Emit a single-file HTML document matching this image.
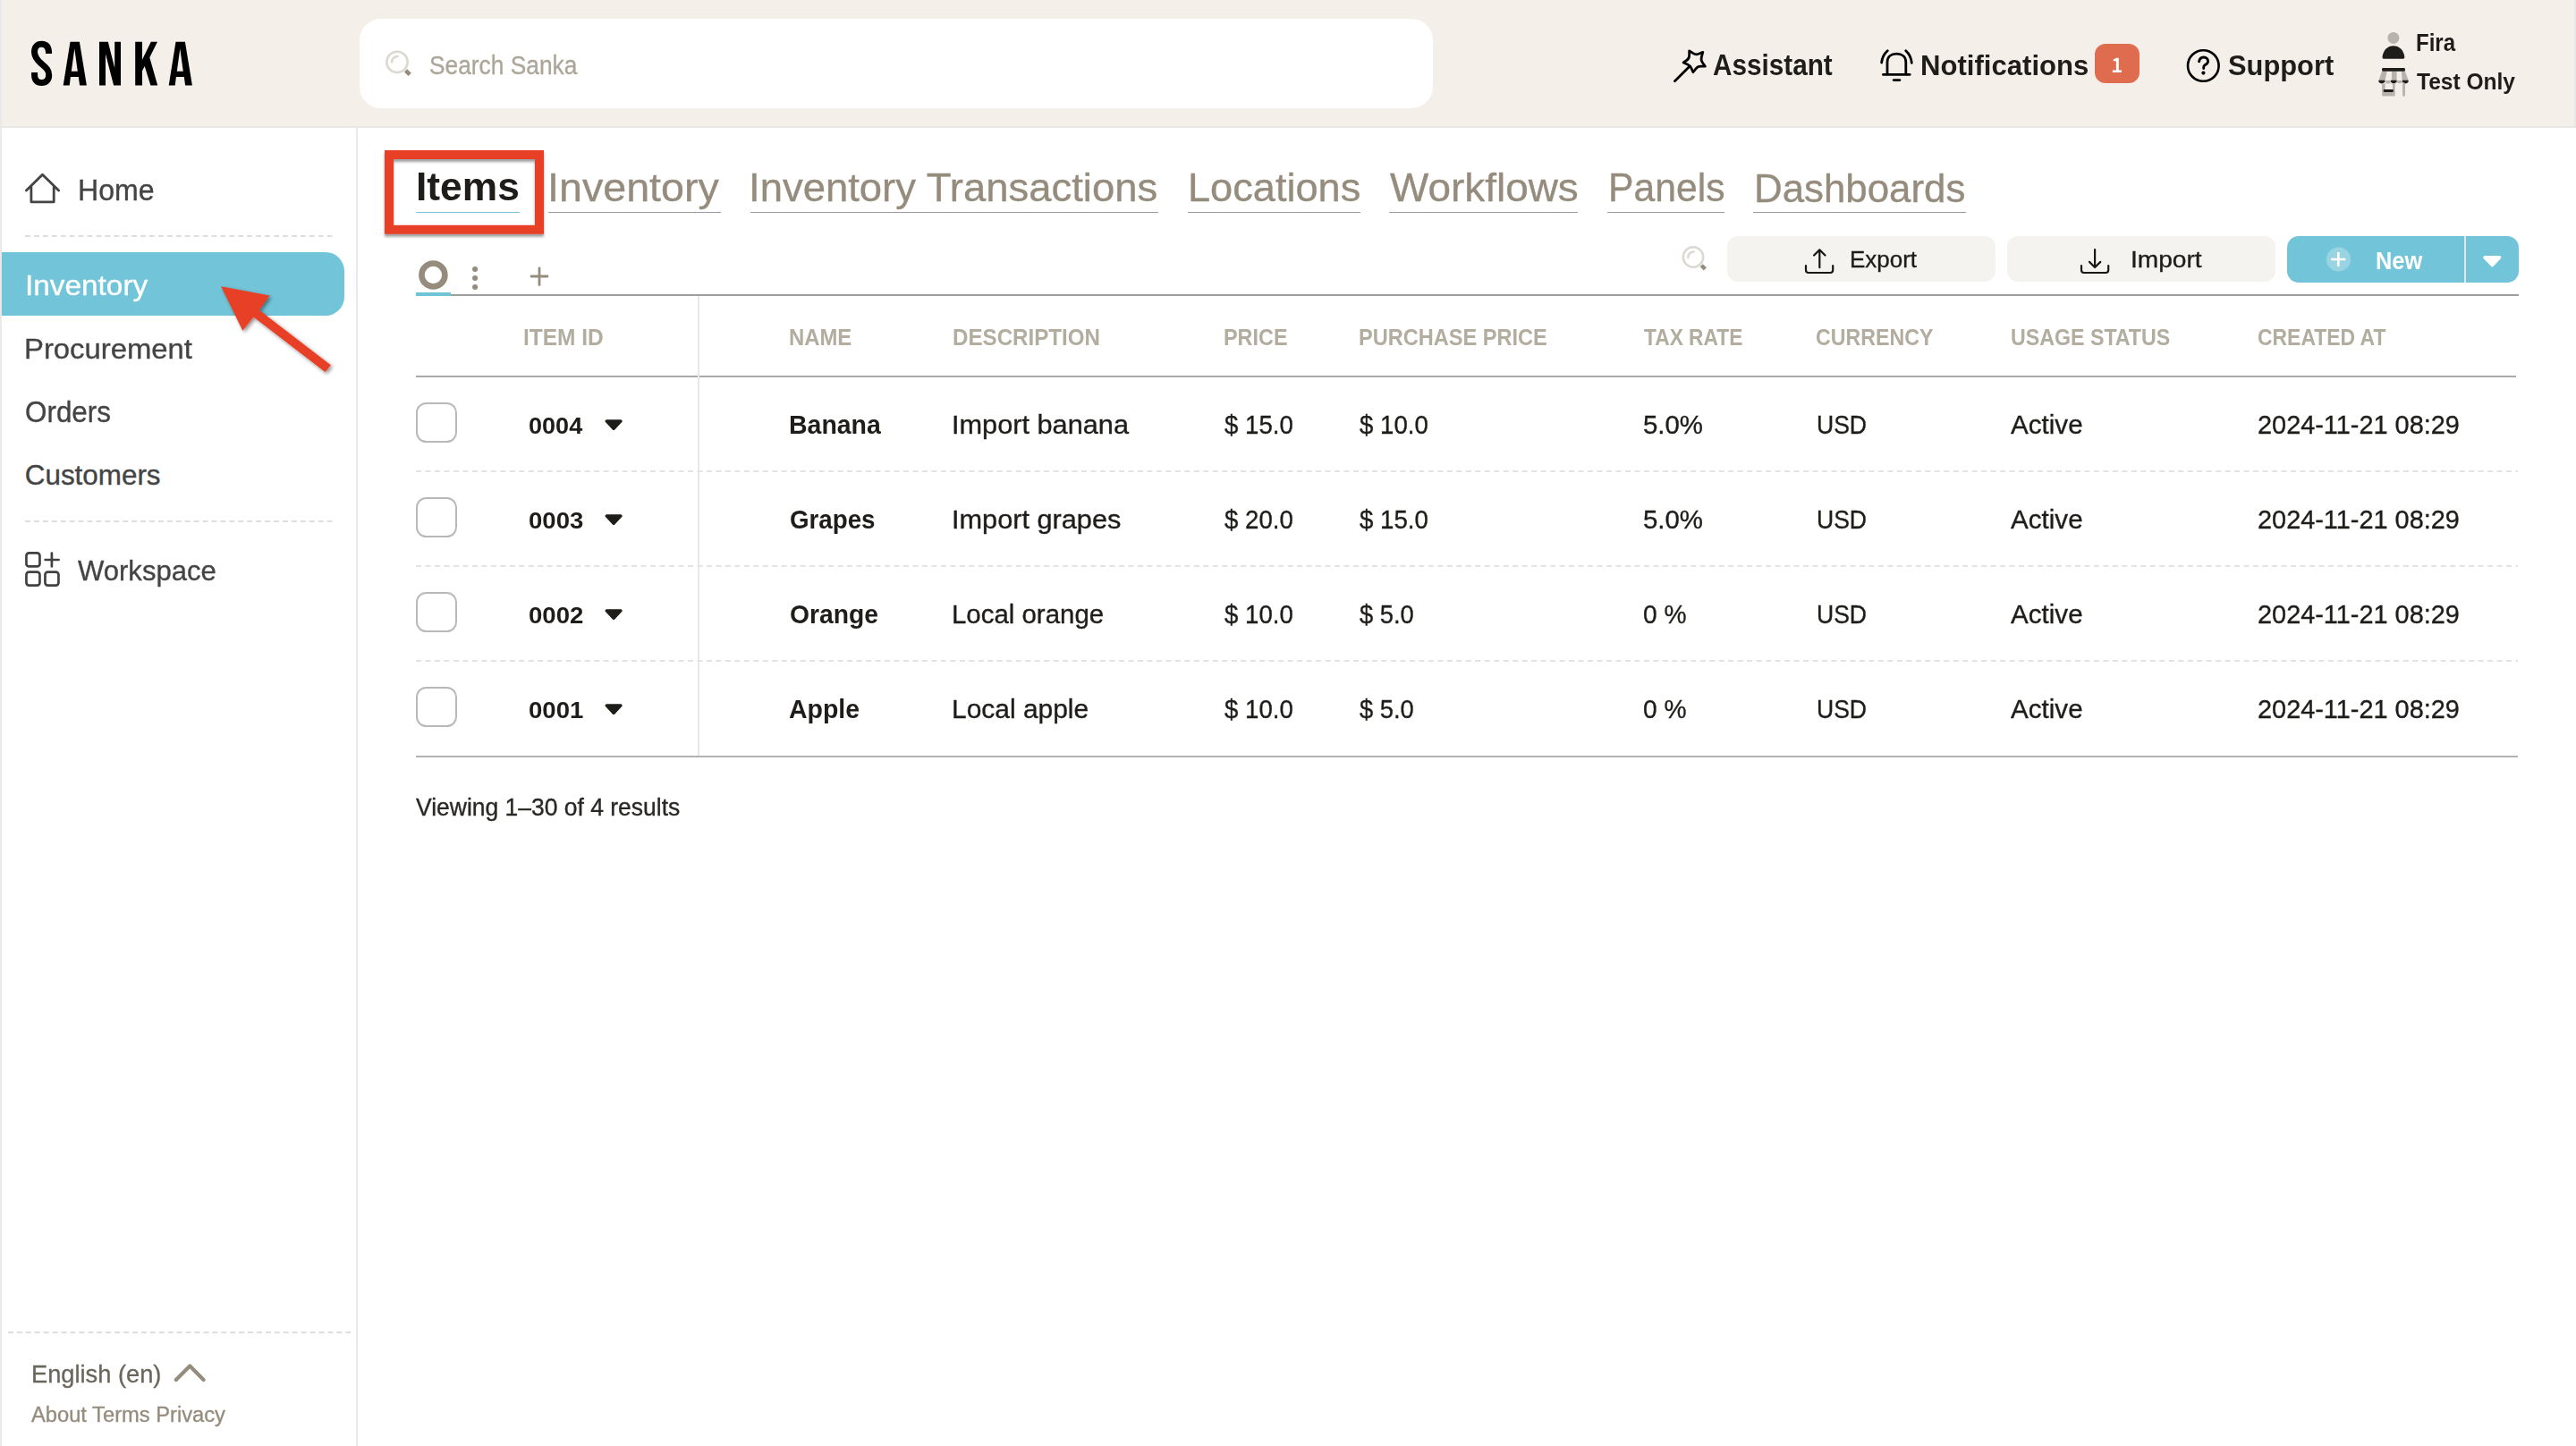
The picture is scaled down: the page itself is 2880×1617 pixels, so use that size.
<!DOCTYPE html>
<html><head><meta charset="utf-8"><title>Sanka - Items</title>
<style>
html,body{margin:0;padding:0;}
body{width:2880px;height:1617px;position:relative;overflow:hidden;background:#ffffff;font-family:"Liberation Sans",sans-serif;}
.a{position:absolute;box-sizing:border-box;}
.t{position:absolute;white-space:nowrap;transform-origin:0 0;font-family:"Liberation Sans",sans-serif;}
svg{position:absolute;overflow:visible;}
</style></head>
<body>
<div class="a" style="left:0px;top:0px;width:2880px;height:141px;background:#f5efe9;"></div>
<div class="a" style="left:0px;top:141px;width:2880px;height:2px;background:#e8e8e8;"></div>
<div class="a" style="left:2878px;top:0px;width:2px;height:141px;background:#e8e8e8;"></div>
<div class="a" style="left:0px;top:0px;width:2px;height:1617px;background:#e9e9e9;"></div>
<div class="a" style="left:398px;top:143px;width:2px;height:1474px;background:#e9e9e9;"></div>
<div class="a" style="left:402px;top:21px;width:1200px;height:100px;background:#ffffff;border-radius:24px;"></div>
<div class="a" style="left:2342px;top:49px;width:50px;height:44px;background:#e06c50;border-radius:12px;"></div>
<div class="a" style="left:2px;top:282px;width:383px;height:71px;background:#72c4d8;border-radius:0 21px 21px 0;"></div>
<div class="a" style="left:465px;top:237px;width:116px;height:1px;background:#72c4d8;"></div>
<div class="a" style="left:613px;top:237px;width:193px;height:1px;background:#9a9a9a;"></div>
<div class="a" style="left:839px;top:237px;width:456px;height:1px;background:#9a9a9a;"></div>
<div class="a" style="left:1328px;top:237px;width:193px;height:1px;background:#9a9a9a;"></div>
<div class="a" style="left:1553px;top:237px;width:211px;height:1px;background:#9a9a9a;"></div>
<div class="a" style="left:1797px;top:237px;width:131px;height:1px;background:#9a9a9a;"></div>
<div class="a" style="left:1960px;top:237px;width:238px;height:1px;background:#9a9a9a;"></div>
<div class="a" style="left:465px;top:329px;width:2350.5px;height:2px;background:#9e9e9e;"></div>
<div class="a" style="left:465px;top:327px;width:39px;height:4px;background:#6ec5d8;"></div>
<div class="a" style="left:1931px;top:264px;width:300px;height:51px;background:#f5f3ef;border-radius:12px;"></div>
<div class="a" style="left:2244px;top:264px;width:300px;height:51px;background:#f5f3ef;border-radius:12px;"></div>
<div class="a" style="left:2557px;top:264px;width:258.5px;height:52px;background:#72c4d8;border-radius:13px;"></div>
<div class="a" style="left:2755px;top:264px;width:2px;height:52px;background:#e3e6e6;"></div>
<div class="a" style="left:465px;top:420px;width:2348px;height:2px;background:#a9a9a9;"></div>
<div class="a" style="left:780px;top:331px;width:2px;height:514px;background:#e8e8e8;"></div>
<div class="a" style="left:465px;top:845px;width:2350px;height:2px;background:#b3b3b3;"></div>
<div class="a" style="left:465px;top:450.3px;width:45.5px;height:44.5px;background:transparent;border:2px solid #b9b9b9;border-radius:11.5px;"></div>
<div class="a" style="left:465px;top:556.3px;width:45.5px;height:44.5px;background:transparent;border:2px solid #b9b9b9;border-radius:11.5px;"></div>
<div class="a" style="left:465px;top:662.3px;width:45.5px;height:44.5px;background:transparent;border:2px solid #b9b9b9;border-radius:11.5px;"></div>
<div class="a" style="left:465px;top:768.3px;width:45.5px;height:44.5px;background:transparent;border:2px solid #b9b9b9;border-radius:11.5px;"></div>
<svg width="2880" height="1617" style="left:0;top:0"><path d="M54.6 60 C54.6 52.5 51.5 49.3 46.5 49.3 C41.5 49.3 38.5 52.5 38.5 58 C38.5 64 42 67.5 46 71 C51 75.5 54.7 78 54.7 84 C54.7 89.5 51.5 92.5 46.5 92.5 C41.5 92.5 38.6 89.5 38.6 84 L38.6 81" fill="none" stroke="#000" stroke-width="7"/><path d="M78.5 46.7 L88.9 46.7 L96.9 95.6 L89.1 95.6 L87.8 85.9 L78.9 85.9 L77.7 95.6 L70.7 95.6 Z M83.3 54.5 L86.8 79.8 L79.8 79.8 Z M111 46.7 L120.8 46.7 L128.2 75.9 L128.2 46.7 L135 46.7 L135 95.6 L127.1 95.6 L118 60.3 L118 95.6 L111 95.6 Z M151.2 46.7 L159 46.7 L159 66.8 L168.8 46.7 L176 46.7 L167.3 64.3 L176.2 95.6 L168.4 95.6 L161.7 73.9 L159 79.3 L159 95.6 L151.2 95.6 Z M196.5 46.7 L206.9 46.7 L214.9 95.6 L207.1 95.6 L205.8 85.9 L196.9 85.9 L195.7 95.6 L188.7 95.6 Z M201.3 54.5 L204.8 79.8 L197.8 79.8 Z" fill="#000" fill-rule="evenodd"/></svg>
<svg width="2880" height="1617" style="left:0;top:0" fill="none" stroke-linecap="round" stroke-linejoin="round">
<circle cx="444" cy="69.4" r="11.7" stroke="#dcd9d3" stroke-width="2.6"/>
<path d="M438 69.5 A6.6 6.6 0 0 1 444.6 63" stroke="#dcd9d3" stroke-width="2.6"/>
<path d="M453.6 78.8 L458.2 83.4" stroke="#958c7d" stroke-width="4.6" stroke-linecap="butt"/>
<path d="M1888.7 56.8 L1893.02 59.68 Q1895.9 61.6 1899.06 60.32 L1903.8 58.4 L1902.36 63.68 Q1901.4 67.2 1903.40 70.00 L1906.4 74.2 L1901.42 74.20 Q1898.1 74.2 1896.02 76.80 L1892.9 80.7 L1890.92 76.26 Q1889.6 73.3 1886.60 71.98 L1882.1 70 L1886.00 67.24 Q1888.6 65.4 1888.64 61.96 L1888.7 56.8 Z" stroke="#000000" stroke-width="2.8"/>
<path d="M1888.9 74.2 L1872.4 90.7" stroke="#000000" stroke-width="2.8"/>
<path d="M2110 82.5 L2110 69.5 C2110 63.5 2114.5 60.2 2120.4 60.2 C2126.3 60.2 2130.8 63.5 2130.8 69.5 L2130.8 82.5" stroke="#000000" stroke-width="2.8"/>
<path d="M2105.5 83.4 L2135.1 83.4" stroke="#000000" stroke-width="2.9"/>
<path d="M2117.2 89.6 L2123.9 89.6" stroke="#000000" stroke-width="2.8"/>
<path d="M2103.6 70 C2104.2 64.5 2106.5 60 2110.3 56.7" stroke="#000000" stroke-width="2.8"/>
<path d="M2130.7 56.7 C2134.5 60 2136.8 64.5 2137.3 70.4" stroke="#000000" stroke-width="2.8"/>
<circle cx="2463.3" cy="73.5" r="17.3" stroke="#000000" stroke-width="2.6"/>
<path d="M2458.6 68.8 C2459.1 65.6 2460.9 64 2463.7 64 C2466.7 64 2468.6 65.9 2468.6 68.4 C2468.6 71.1 2466.1 72.1 2464.7 73.1 C2463.9 73.7 2463.7 74.6 2463.7 75.6 L2463.7 76.6" stroke="#000000" stroke-width="2.9"/>
<circle cx="2463.4" cy="81.6" r="2.1" fill="#000000" stroke="none"/>
<path d="M2365.9 64.8 L2368.8 64.8 L2368.8 78.5 L2372 78.5 L2372 81 L2361.9 81 L2361.9 78.5 L2365.9 78.5 L2365.9 68.3 L2362.7 68.3 L2362.7 66.4 C2364 66.2 2365 65.7 2365.9 64.8 Z" fill="#ffffff" stroke="none"/>
<circle cx="2675.9" cy="42.4" r="6.5" fill="#b7b4ad" stroke="none"/>
<path d="M2663.5 63.5 C2664.5 56 2669.5 51.2 2675.9 51.2 C2682.3 51.2 2687.3 56 2688.3 63.5 C2688.5 65 2687.5 65.8 2686 65.8 L2665.8 65.8 C2664.3 65.8 2663.3 65 2663.5 63.5 Z" fill="#1f1d1a" stroke="none"/>
<path d="M2663.1 79.6 L2688.9 79.6 L2692.6 90 L2659.4 90 Z" fill="#b7b4ad" stroke="none"/>
<path d="M2668.8 79.6 L2673.9 79.6 L2673.9 90 L2666.5 90 Z M2679.6 79.6 L2684.8 79.6 L2685.6 90 L2679.6 90 Z" fill="#f5efe9" stroke="none"/>
<rect x="2663.1" y="75.9" width="25.8" height="3.9" rx="1.2" fill="#1f1d1a" stroke="none"/>
<path d="M2666.6 90 L2686 90 L2686 92 C2685 93.6 2680 93.6 2679 92 L2679 90 L2673 90 L2673 92 C2672 93.6 2667.6 93.6 2666.6 92 Z" fill="#b7b4ad" stroke="none"/>
<path d="M2659.4 89.8 L2666.3 89.8 L2666.3 91.6 C2665 94 2660.6 94 2659.4 91.6 Z M2673 89.8 L2679.4 89.8 L2679.4 91.6 C2678.2 94 2674.2 94 2673 91.6 Z M2686 89.8 L2692.6 89.8 L2692.6 91.6 C2691.4 94 2687.2 94 2686 91.6 Z" fill="#1f1d1a" stroke="none"/>
<path d="M2663.1 93.6 L2677.7 93.6 L2677.7 106.6 Q2677.7 107.6 2676.7 107.6 L2664.1 107.6 Q2663.1 107.6 2663.1 106.6 Z" fill="#b7b4ad" stroke="none"/>
<rect x="2666.6" y="93.6" width="8.3" height="6.6" fill="#f5efe9" stroke="none"/>
<rect x="2664.7" y="100.1" width="11.2" height="2.9" rx="1.2" fill="#1f1d1a" stroke="none"/>
<path d="M2687.5 94 L2687.5 106.4" stroke="#b7b4ad" stroke-width="2.9"/>
<path d="M29.4 213 L47.5 195.2 L65.6 213 M34.9 208 L34.9 225.8 L60.2 225.8 L60.2 208" stroke="#444" stroke-width="2.8"/>
<rect x="29.45" y="618.45" width="15" height="15" rx="3" stroke="#414141" stroke-width="2.7"/>
<rect x="29.45" y="639.55" width="15" height="15" rx="3" stroke="#414141" stroke-width="2.7"/>
<rect x="50.45" y="639.55" width="15" height="15" rx="3" stroke="#414141" stroke-width="2.7"/>
<path d="M57.9 618.6 L57.9 633.4 M50.6 626 L65.6 626" stroke="#414141" stroke-width="2.7"/>
<path d="M196.8 1543.1 L212.3 1527.6 L227.6 1543.1" stroke="#958c7d" stroke-width="4.2"/>
<circle cx="484.4" cy="307.5" r="13" stroke="#958c7d" stroke-width="6.6"/>
<circle cx="531.1" cy="301" r="3.05" fill="#958c7d" stroke="none"/>
<circle cx="531.1" cy="311" r="3.05" fill="#958c7d" stroke="none"/>
<circle cx="531.1" cy="321" r="3.05" fill="#958c7d" stroke="none"/>
<path d="M603 300 L603 318.5 M594 309 L612 309" stroke="#958c7d" stroke-width="2.8"/>
<circle cx="1893" cy="287.5" r="11.2" stroke="#dcd9d3" stroke-width="2.6"/>
<path d="M1887.2 288 A6.3 6.3 0 0 1 1893.5 281.5" stroke="#dcd9d3" stroke-width="2.6"/>
<path d="M1902.2 296.7 L1906.4 300.9" stroke="#958c7d" stroke-width="4.4" stroke-linecap="butt"/>
<path d="M2019 297 L2019 302 Q2019 305 2022 305 L2046.2 305 Q2049.2 305 2049.2 302 L2049.2 297 M2034.3 299.2 L2034.3 279.6 M2028.1 285.5 L2034.3 279.3 L2040.5 285.5" stroke="#1a1815" stroke-width="2.2"/>
<path d="M2327 297 L2327 302 Q2327 305 2330 305 L2354.2 305 Q2357.2 305 2357.2 302 L2357.2 297 M2342.1 279 L2342.1 298.6 M2336 292.9 L2342.1 299 L2348.3 292.9" stroke="#1a1815" stroke-width="2.2"/>
<circle cx="2614.5" cy="290" r="13.6" fill="rgba(255,255,255,0.28)" stroke="none"/>
<path d="M2614.3 282.1 L2614.3 297.9 M2606.2 290 L2622.3 290" stroke="#ffffff" stroke-width="2.6" stroke-linecap="butt"/>
<path d="M2778.2 287.9 L2794.5 287.9 L2786.35 296.5 Z" fill="#ffffff" stroke="#ffffff" stroke-width="3.6" stroke-linejoin="round"/>
<path d="M678.2 470.9 L694 470.9 L686.1 479.3 Z" fill="#1f1d1a" stroke="#1f1d1a" stroke-width="3.4" stroke-linejoin="round"/>
<path d="M678.2 576.9 L694 576.9 L686.1 585.3 Z" fill="#1f1d1a" stroke="#1f1d1a" stroke-width="3.4" stroke-linejoin="round"/>
<path d="M678.2 682.9 L694 682.9 L686.1 691.3 Z" fill="#1f1d1a" stroke="#1f1d1a" stroke-width="3.4" stroke-linejoin="round"/>
<path d="M678.2 788.9 L694 788.9 L686.1 797.3 Z" fill="#1f1d1a" stroke="#1f1d1a" stroke-width="3.4" stroke-linejoin="round"/>
<path d="M28 264 L372 264 M28 583 L372 583" stroke="#dfdedb" stroke-width="2" stroke-dasharray="5.9 4.03" stroke-linecap="butt"/>
<path d="M9 1490 L396 1490" stroke="#dfdedb" stroke-width="2" stroke-dasharray="5.9 4.03" stroke-linecap="butt"/>
<path d="M465 527 L2815 527" stroke="#e3e3e3" stroke-width="2" stroke-dasharray="6 4.48" stroke-linecap="butt"/>
<path d="M465 633 L2815 633" stroke="#e3e3e3" stroke-width="2" stroke-dasharray="6 4.48" stroke-linecap="butt"/>
<path d="M465 739 L2815 739" stroke="#e3e3e3" stroke-width="2" stroke-dasharray="6 4.48" stroke-linecap="butt"/>
</svg>
<div class="t" style="left:480.10px;top:58.44px;font-size:29.36px;line-height:29.36px;font-weight:400;color:#aca698;transform:scaleX(0.8963);-webkit-text-stroke:0.35px #aca698">Search Sanka</div>
<div class="t" style="left:1914.60px;top:56.83px;font-size:32.56px;line-height:32.56px;font-weight:700;color:#1f1d1a;transform:scaleX(0.9129)">Assistant</div>
<div class="t" style="left:2146.57px;top:56.88px;font-size:32.27px;line-height:32.27px;font-weight:700;color:#1f1d1a;transform:scaleX(0.9643)">Notifications</div>
<div class="t" style="left:2491.00px;top:56.88px;font-size:32.27px;line-height:32.27px;font-weight:700;color:#1f1d1a;transform:scaleX(0.9559)">Support</div>
<div class="t" style="left:2701.11px;top:35.31px;font-size:27.03px;line-height:27.03px;font-weight:700;color:#1f1d1a;transform:scaleX(0.8885)">Fira</div>
<div class="t" style="left:2702.00px;top:77.85px;font-size:26.16px;line-height:26.16px;font-weight:700;color:#1f1d1a;transform:scaleX(0.9380)">Test Only</div>
<div class="t" style="left:86.83px;top:196.83px;font-size:32.56px;line-height:32.56px;font-weight:400;color:#444444;transform:scaleX(0.9867);-webkit-text-stroke:0.35px #444444">Home</div>
<div class="t" style="left:27.81px;top:302.93px;font-size:31.98px;line-height:31.98px;font-weight:400;color:#ffffff;transform:scaleX(1.0431);-webkit-text-stroke:0.35px #ffffff">Inventory</div>
<div class="t" style="left:26.70px;top:374.54px;font-size:31.25px;line-height:31.25px;font-weight:400;color:#444444;transform:scaleX(1.0507);-webkit-text-stroke:0.35px #444444">Procurement</div>
<div class="t" style="left:27.85px;top:443.74px;font-size:33.14px;line-height:33.14px;font-weight:400;color:#444444;transform:scaleX(0.9481);-webkit-text-stroke:0.35px #444444">Orders</div>
<div class="t" style="left:27.80px;top:516.02px;font-size:31.40px;line-height:31.40px;font-weight:400;color:#444444;transform:scaleX(1.0000);-webkit-text-stroke:0.35px #444444">Customers</div>
<div class="t" style="left:87.40px;top:621.60px;font-size:32.12px;line-height:32.12px;font-weight:400;color:#444444;transform:scaleX(0.9670);-webkit-text-stroke:0.35px #444444">Workspace</div>
<div class="t" style="left:34.59px;top:1521.88px;font-size:28.49px;line-height:28.49px;font-weight:400;color:#6b665c;transform:scaleX(0.9567);-webkit-text-stroke:0.35px #6b665c">English (en)</div>
<div class="t" style="left:35.00px;top:1569.69px;font-size:23.98px;line-height:23.98px;font-weight:400;color:#958c7d;transform:scaleX(0.9891);-webkit-text-stroke:0.35px #958c7d">About Terms Privacy</div>
<div class="t" style="left:464.97px;top:187.58px;font-size:43.60px;line-height:43.60px;font-weight:700;color:#1f1d1a;transform:scaleX(1.0169)">Items</div>
<div class="t" style="left:612.30px;top:188.14px;font-size:44.48px;line-height:44.48px;font-weight:400;color:#958c7d;transform:scaleX(1.0491);-webkit-text-stroke:0.35px #958c7d">Inventory</div>
<div class="t" style="left:837.21px;top:188.14px;font-size:44.48px;line-height:44.48px;font-weight:400;color:#958c7d;transform:scaleX(1.0220);-webkit-text-stroke:0.35px #958c7d">Inventory Transactions</div>
<div class="t" style="left:1327.95px;top:188.14px;font-size:44.48px;line-height:44.48px;font-weight:400;color:#958c7d;transform:scaleX(1.0154);-webkit-text-stroke:0.35px #958c7d">Locations</div>
<div class="t" style="left:1554.30px;top:188.14px;font-size:44.48px;line-height:44.48px;font-weight:400;color:#958c7d;transform:scaleX(1.0319);-webkit-text-stroke:0.35px #958c7d">Workflows</div>
<div class="t" style="left:1797.62px;top:188.14px;font-size:44.48px;line-height:44.48px;font-weight:400;color:#958c7d;transform:scaleX(0.9603);-webkit-text-stroke:0.35px #958c7d">Panels</div>
<div class="t" style="left:1961.36px;top:187.90px;font-size:44.77px;line-height:44.77px;font-weight:400;color:#958c7d;transform:scaleX(0.9792);-webkit-text-stroke:0.35px #958c7d">Dashboards</div>
<div class="t" style="left:2068.02px;top:277.10px;font-size:26.16px;line-height:26.16px;font-weight:400;color:#1f1d1a;transform:scaleX(0.9922);-webkit-text-stroke:0.35px #1f1d1a">Export</div>
<div class="t" style="left:2381.60px;top:277.10px;font-size:26.16px;line-height:26.16px;font-weight:400;color:#1f1d1a;transform:scaleX(1.0740);-webkit-text-stroke:0.35px #1f1d1a">Import</div>
<div class="t" style="left:2656.32px;top:278.17px;font-size:27.25px;line-height:27.25px;font-weight:700;color:#ffffff;transform:scaleX(0.9313)">New</div>
<div class="t" style="left:585.33px;top:364.04px;font-size:26.53px;line-height:26.53px;font-weight:700;color:#b2ad9f;transform:scaleX(0.9238)">ITEM ID</div>
<div class="t" style="left:881.60px;top:364.04px;font-size:26.53px;line-height:26.53px;font-weight:700;color:#b2ad9f;transform:scaleX(0.9000)">NAME</div>
<div class="t" style="left:1065.34px;top:364.04px;font-size:26.53px;line-height:26.53px;font-weight:700;color:#b2ad9f;transform:scaleX(0.9103)">DESCRIPTION</div>
<div class="t" style="left:1367.87px;top:364.04px;font-size:26.53px;line-height:26.53px;font-weight:700;color:#b2ad9f;transform:scaleX(0.8822)">PRICE</div>
<div class="t" style="left:1519.11px;top:364.04px;font-size:26.53px;line-height:26.53px;font-weight:700;color:#b2ad9f;transform:scaleX(0.8885)">PURCHASE PRICE</div>
<div class="t" style="left:1838.25px;top:364.04px;font-size:26.53px;line-height:26.53px;font-weight:700;color:#b2ad9f;transform:scaleX(0.8577)">TAX RATE</div>
<div class="t" style="left:2030.38px;top:364.04px;font-size:26.53px;line-height:26.53px;font-weight:700;color:#b2ad9f;transform:scaleX(0.8741)">CURRENCY</div>
<div class="t" style="left:2247.63px;top:364.04px;font-size:26.53px;line-height:26.53px;font-weight:700;color:#b2ad9f;transform:scaleX(0.8746)">USAGE STATUS</div>
<div class="t" style="left:2524.39px;top:364.04px;font-size:26.53px;line-height:26.53px;font-weight:700;color:#b2ad9f;transform:scaleX(0.8643)">CREATED AT</div>
<div class="t" style="left:591.48px;top:462.80px;font-size:26.45px;line-height:26.45px;font-weight:700;color:#1f1d1a;transform:scaleX(1.0239)">0004</div>
<div class="t" style="left:881.59px;top:459.97px;font-size:29.80px;line-height:29.80px;font-weight:700;color:#1f1d1a;transform:scaleX(0.9550)">Banana</div>
<div class="t" style="left:1064.19px;top:459.97px;font-size:29.80px;line-height:29.80px;font-weight:400;color:#1f1d1a;transform:scaleX(1.0302);-webkit-text-stroke:0.35px #1f1d1a">Import banana</div>
<div class="t" style="left:1368.75px;top:459.97px;font-size:29.80px;line-height:29.80px;font-weight:400;color:#1f1d1a;transform:scaleX(0.9272);-webkit-text-stroke:0.35px #1f1d1a">$ 15.0</div>
<div class="t" style="left:1520.30px;top:459.97px;font-size:29.80px;line-height:29.80px;font-weight:400;color:#1f1d1a;transform:scaleX(0.9272);-webkit-text-stroke:0.35px #1f1d1a">$ 10.0</div>
<div class="t" style="left:1837.26px;top:459.97px;font-size:29.80px;line-height:29.80px;font-weight:400;color:#1f1d1a;transform:scaleX(0.9864);-webkit-text-stroke:0.35px #1f1d1a">5.0%</div>
<div class="t" style="left:2030.72px;top:459.97px;font-size:29.80px;line-height:29.80px;font-weight:400;color:#1f1d1a;transform:scaleX(0.8903);-webkit-text-stroke:0.35px #1f1d1a">USD</div>
<div class="t" style="left:2248.00px;top:459.97px;font-size:29.80px;line-height:29.80px;font-weight:400;color:#1f1d1a;transform:scaleX(0.9933);-webkit-text-stroke:0.35px #1f1d1a">Active</div>
<div class="t" style="left:2523.78px;top:459.97px;font-size:29.80px;line-height:29.80px;font-weight:400;color:#1f1d1a;transform:scaleX(0.9693);-webkit-text-stroke:0.35px #1f1d1a">2024-11-21 08:29</div>
<div class="t" style="left:591.46px;top:568.80px;font-size:26.45px;line-height:26.45px;font-weight:700;color:#1f1d1a;transform:scaleX(1.0419)">0003</div>
<div class="t" style="left:882.57px;top:565.97px;font-size:29.80px;line-height:29.80px;font-weight:700;color:#1f1d1a;transform:scaleX(0.9300)">Grapes</div>
<div class="t" style="left:1064.19px;top:565.97px;font-size:29.80px;line-height:29.80px;font-weight:400;color:#1f1d1a;transform:scaleX(1.0299);-webkit-text-stroke:0.35px #1f1d1a">Import grapes</div>
<div class="t" style="left:1368.75px;top:565.97px;font-size:29.80px;line-height:29.80px;font-weight:400;color:#1f1d1a;transform:scaleX(0.9272);-webkit-text-stroke:0.35px #1f1d1a">$ 20.0</div>
<div class="t" style="left:1520.30px;top:565.97px;font-size:29.80px;line-height:29.80px;font-weight:400;color:#1f1d1a;transform:scaleX(0.9272);-webkit-text-stroke:0.35px #1f1d1a">$ 15.0</div>
<div class="t" style="left:1837.26px;top:565.97px;font-size:29.80px;line-height:29.80px;font-weight:400;color:#1f1d1a;transform:scaleX(0.9864);-webkit-text-stroke:0.35px #1f1d1a">5.0%</div>
<div class="t" style="left:2030.72px;top:565.97px;font-size:29.80px;line-height:29.80px;font-weight:400;color:#1f1d1a;transform:scaleX(0.8903);-webkit-text-stroke:0.35px #1f1d1a">USD</div>
<div class="t" style="left:2248.00px;top:565.97px;font-size:29.80px;line-height:29.80px;font-weight:400;color:#1f1d1a;transform:scaleX(0.9933);-webkit-text-stroke:0.35px #1f1d1a">Active</div>
<div class="t" style="left:2523.78px;top:565.97px;font-size:29.80px;line-height:29.80px;font-weight:400;color:#1f1d1a;transform:scaleX(0.9693);-webkit-text-stroke:0.35px #1f1d1a">2024-11-21 08:29</div>
<div class="t" style="left:591.46px;top:674.80px;font-size:26.45px;line-height:26.45px;font-weight:700;color:#1f1d1a;transform:scaleX(1.0419)">0002</div>
<div class="t" style="left:882.55px;top:671.97px;font-size:29.80px;line-height:29.80px;font-weight:700;color:#1f1d1a;transform:scaleX(0.9494)">Orange</div>
<div class="t" style="left:1064.28px;top:671.97px;font-size:29.80px;line-height:29.80px;font-weight:400;color:#1f1d1a;transform:scaleX(0.9874);-webkit-text-stroke:0.35px #1f1d1a">Local orange</div>
<div class="t" style="left:1368.75px;top:671.97px;font-size:29.80px;line-height:29.80px;font-weight:400;color:#1f1d1a;transform:scaleX(0.9272);-webkit-text-stroke:0.35px #1f1d1a">$ 10.0</div>
<div class="t" style="left:1520.30px;top:671.97px;font-size:29.80px;line-height:29.80px;font-weight:400;color:#1f1d1a;transform:scaleX(0.9174);-webkit-text-stroke:0.35px #1f1d1a">$ 5.0</div>
<div class="t" style="left:1837.30px;top:671.97px;font-size:29.80px;line-height:29.80px;font-weight:400;color:#1f1d1a;transform:scaleX(0.9451);-webkit-text-stroke:0.35px #1f1d1a">0 %</div>
<div class="t" style="left:2030.72px;top:671.97px;font-size:29.80px;line-height:29.80px;font-weight:400;color:#1f1d1a;transform:scaleX(0.8903);-webkit-text-stroke:0.35px #1f1d1a">USD</div>
<div class="t" style="left:2248.00px;top:671.97px;font-size:29.80px;line-height:29.80px;font-weight:400;color:#1f1d1a;transform:scaleX(0.9933);-webkit-text-stroke:0.35px #1f1d1a">Active</div>
<div class="t" style="left:2523.78px;top:671.97px;font-size:29.80px;line-height:29.80px;font-weight:400;color:#1f1d1a;transform:scaleX(0.9693);-webkit-text-stroke:0.35px #1f1d1a">2024-11-21 08:29</div>
<div class="t" style="left:591.46px;top:780.80px;font-size:26.45px;line-height:26.45px;font-weight:700;color:#1f1d1a;transform:scaleX(1.0419)">0001</div>
<div class="t" style="left:882.30px;top:777.97px;font-size:29.80px;line-height:29.80px;font-weight:700;color:#1f1d1a;transform:scaleX(0.9554)">Apple</div>
<div class="t" style="left:1064.24px;top:777.97px;font-size:29.80px;line-height:29.80px;font-weight:400;color:#1f1d1a;transform:scaleX(1.0048);-webkit-text-stroke:0.35px #1f1d1a">Local apple</div>
<div class="t" style="left:1368.75px;top:777.97px;font-size:29.80px;line-height:29.80px;font-weight:400;color:#1f1d1a;transform:scaleX(0.9272);-webkit-text-stroke:0.35px #1f1d1a">$ 10.0</div>
<div class="t" style="left:1520.30px;top:777.97px;font-size:29.80px;line-height:29.80px;font-weight:400;color:#1f1d1a;transform:scaleX(0.9174);-webkit-text-stroke:0.35px #1f1d1a">$ 5.0</div>
<div class="t" style="left:1837.30px;top:777.97px;font-size:29.80px;line-height:29.80px;font-weight:400;color:#1f1d1a;transform:scaleX(0.9451);-webkit-text-stroke:0.35px #1f1d1a">0 %</div>
<div class="t" style="left:2030.72px;top:777.97px;font-size:29.80px;line-height:29.80px;font-weight:400;color:#1f1d1a;transform:scaleX(0.8903);-webkit-text-stroke:0.35px #1f1d1a">USD</div>
<div class="t" style="left:2248.00px;top:777.97px;font-size:29.80px;line-height:29.80px;font-weight:400;color:#1f1d1a;transform:scaleX(0.9933);-webkit-text-stroke:0.35px #1f1d1a">Active</div>
<div class="t" style="left:2523.78px;top:777.97px;font-size:29.80px;line-height:29.80px;font-weight:400;color:#1f1d1a;transform:scaleX(0.9693);-webkit-text-stroke:0.35px #1f1d1a">2024-11-21 08:29</div>
<div class="t" style="left:465.00px;top:888.62px;font-size:27.62px;line-height:27.62px;font-weight:400;color:#2a2825;transform:scaleX(0.9587);-webkit-text-stroke:0.35px #2a2825">Viewing 1–30 of 4 results</div>
<svg width="2880" height="1617" style="left:0;top:0">
<defs><filter id="sh" x="-20%" y="-20%" width="140%" height="140%"><feGaussianBlur in="SourceAlpha" stdDeviation="2"/><feOffset dx="1.5" dy="2" result="b"/><feComponentTransfer><feFuncA type="linear" slope="0.45"/></feComponentTransfer><feMerge><feMergeNode/><feMergeNode in="SourceGraphic"/></feMerge></filter><filter id="sh2" x="-20%" y="-20%" width="140%" height="140%"><feGaussianBlur in="SourceAlpha" stdDeviation="1.6"/><feOffset dx="0.4" dy="2.6" result="b"/><feComponentTransfer><feFuncA type="linear" slope="0.38"/></feComponentTransfer><feMerge><feMergeNode/><feMergeNode in="SourceGraphic"/></feMerge></filter></defs>
<path d="M247.1 320.2 L301.5 330.6 L289.8 346.7 L369.8 408.3 L363.5 416 L283.5 354.4 L271.3 369.7 Z" fill="#e84126" filter="url(#sh)"/>
<path d="M435 173 L603 173 L603 256.8 L435 256.8 Z" fill="none" stroke="#e84126" stroke-width="10" filter="url(#sh2)"/>
</svg>
</body></html>
